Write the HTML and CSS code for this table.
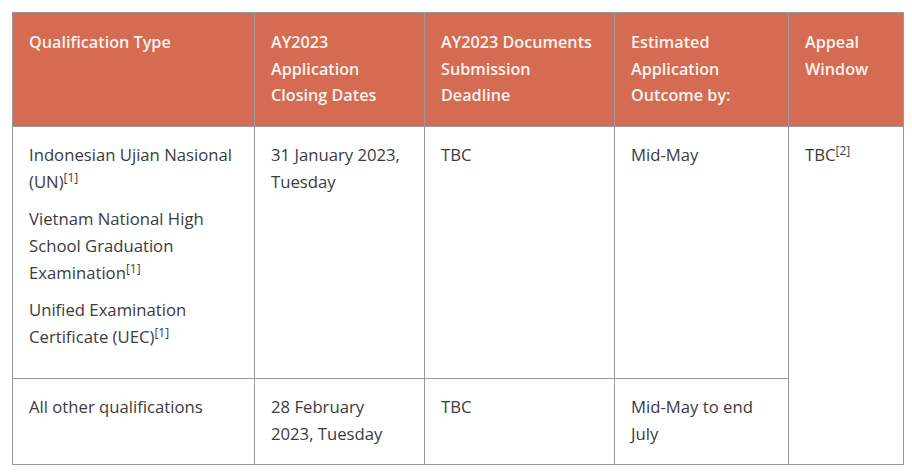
FILE: index.html
```html
<!DOCTYPE html>
<html lang="en">
<head>
<meta charset="utf-8">
<link rel="stylesheet" href="styles.css">
</head>
<body>
<div class="wrap">
<table class="dates">
  <colgroup>
    <col class="c1"><col class="c2"><col class="c3"><col class="c4"><col class="c5">
  </colgroup>
  <thead>
    <tr>
      <th>Qualification Type</th>
      <th>AY2023 Application Closing Dates</th>
      <th>AY2023 Documents Submission Deadline</th>
      <th>Estimated Application Outcome by:</th>
      <th>Appeal Window</th>
    </tr>
  </thead>
  <tbody>
    <tr class="r1">
      <td>
        <p>Indonesian Ujian Nasional (UN)<sup>[1]</sup></p>
        <p>Vietnam National High School Graduation Examination<sup>[1]</sup></p>
        <p>Unified Examination Certificate (UEC)<sup>[1]</sup></p>
      </td>
      <td>31 January 2023, Tuesday</td>
      <td>TBC</td>
      <td>Mid-May</td>
      <td rowspan="2">TBC<sup>[2]</sup></td>
    </tr>
    <tr>
      <td>All other qualifications</td>
      <td>28 February 2023, Tuesday</td>
      <td>TBC</td>
      <td>Mid-May to end July</td>
    </tr>
  </tbody>
</table>
</div>
</body>
</html>
```
FILE: styles.css
```css
html, body {
  margin: 0;
  padding: 0;
  background: #fff;
}
.wrap {
  padding: 12px 0 0 12px;
}
.dates {
  border-collapse: collapse;
  width: 891px;
  table-layout: fixed;
  font-family: "Open Sans", "Noto Sans", sans-serif;
  font-size: 16.7px;
  line-height: 27px;
  color: #3b3b40;
}
.c1 { width: 242px; }
.c2 { width: 170px; }
.c3 { width: 190px; }
.c4 { width: 174px; }
.c5 { width: 115px; }
.dates th,
.dates td {
  border: 1px solid #999;
  padding: 14px 16px 17px 16px;
  text-align: left;
  vertical-align: top;
}
.dates th {
  background: #d46b52;
  color: #fdf3ef;
  font-size: 16.2px;
  font-weight: 600;
  line-height: 26.5px;
  padding-top: 16px;
  padding-bottom: 17.5px;
}
.dates p {
  margin: 0 0 10px;
}
.dates .r1 td {
  padding-bottom: 18px;
}
.dates sup {
  font-size: 12px;
  line-height: 0;
  vertical-align: 6px;
}
```
